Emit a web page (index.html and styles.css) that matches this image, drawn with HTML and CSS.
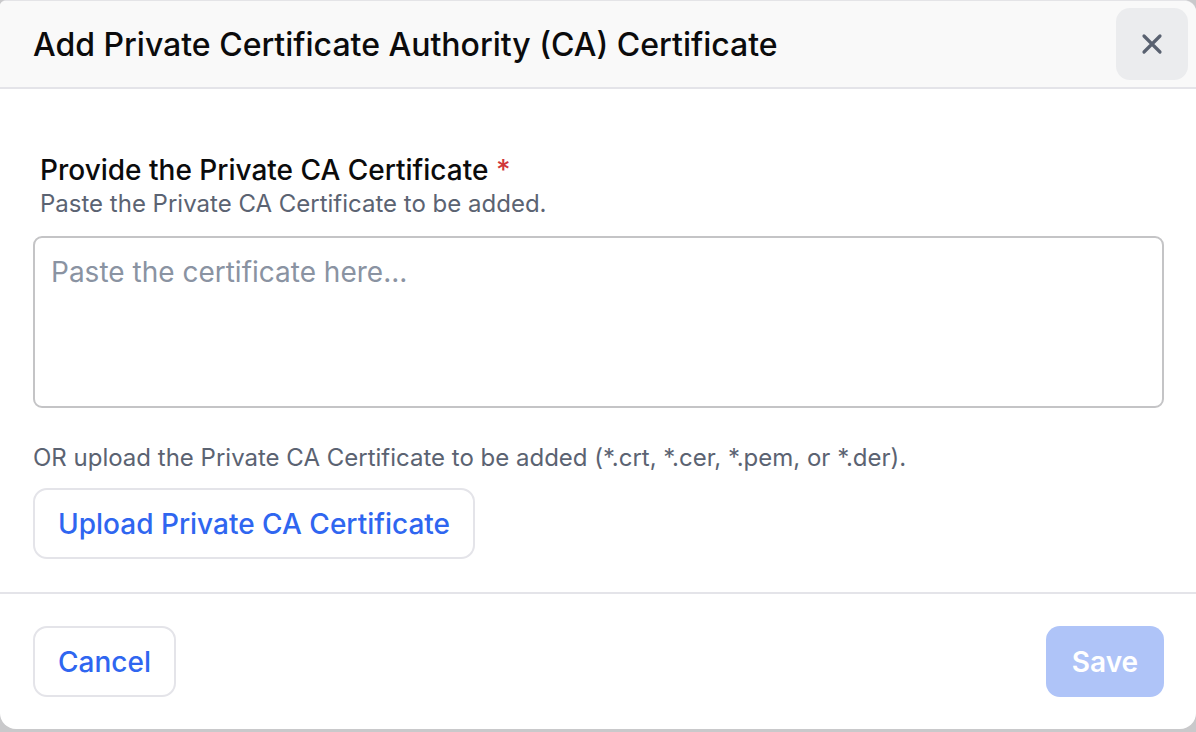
FILE: index.html
```html
<!DOCTYPE html>
<html lang="en">
<head>
<meta charset="utf-8">
<title>Add Private Certificate Authority (CA) Certificate</title>
<link rel="stylesheet" href="styles.css">
</head>
<body>
<div class="dialog">
  <header class="dialog-header">
    <h1 class="dialog-title">Add Private Certificate Authority (CA) Certificate</h1>
    <button class="close-btn" aria-label="Close">
      <svg width="22" height="22" viewBox="0 0 22 22"><path d="M3 3 L19 19 M19 3 L3 19" stroke="#596170" stroke-width="3.2" stroke-linecap="round" fill="none"/></svg>
    </button>
  </header>
  <main class="dialog-body">
    <div class="field-head">
      <div class="field-label">Provide the Private CA Certificate <span class="req">*</span></div>
      <div class="field-help">Paste the Private CA Certificate to be added.</div>
    </div>
    <textarea class="cert-input" placeholder="Paste the certificate here..."></textarea>
    <p class="upload-hint">OR upload the Private CA Certificate to be added (*.crt, *.cer, *.pem, or *.der).</p>
    <button class="btn btn-outline upload-btn">Upload Private CA Certificate</button>
  </main>
  <footer class="dialog-footer">
    <button class="btn btn-outline">Cancel</button>
    <button class="btn btn-primary" disabled>Save</button>
  </footer>
</div>
</body>
</html>
```

FILE: styles.css
```css
* { box-sizing: border-box; }
html, body { margin: 0; padding: 0; }
body {
  background: #c9c9cb;
  font-family: Inter, "Noto Sans", "Liberation Sans", sans-serif;
  width: 1196px;
  height: 732px;
  overflow: hidden;
}
.dialog {
  width: 1196px;
  height: 729px;
  background: #ffffff;
  border-radius: 6px 12px 16px 16px;
  border-top: 1px solid #e4e4e7;
  display: flex;
  flex-direction: column;
  overflow: hidden;
}
.dialog-header {
  height: 88px;
  background: #f9f9f9;
  border-bottom: 2px solid #e4e4e9;
  display: flex;
  align-items: center;
  justify-content: space-between;
  padding: 0 8px 0 33px;
  flex-shrink: 0;
}
.dialog-title {
  margin: 0;
  font-size: 32px;
  font-weight: 500;
  color: #0b0b0c;
  letter-spacing: 0;
}
.close-btn {
  width: 72px;
  height: 72px;
  border: none;
  border-radius: 14px;
  background: #ebecee;
  display: flex;
  align-items: center;
  justify-content: center;
  padding: 0;
  margin-top: -1px;
}
.dialog-body {
  padding: 65px 32px 33px 33px;
  border-bottom: 2px solid #e4e4e9;
  display: flex;
  flex-direction: column;
  align-items: flex-start;
}
.field-head { padding-left: 7px; }
.field-label {
  font-size: 28px;
  font-weight: 500;
  color: #0b0b0c;
  line-height: 32px;
}
.req { color: #d0373a; }
.field-help {
  margin-top: 3px;
  font-size: 24px;
  color: #5b6372;
  line-height: 30px;
}
.cert-input {
  margin-top: 17px;
  width: 1131px;
  height: 172px;
  border: 2px solid #c4c4c6;
  border-radius: 9px;
  padding: 17px 16px;
  font-family: inherit;
  font-size: 28px;
  resize: none;
  outline: none;
  color: #0b0b0c;
}
.cert-input::placeholder { color: #8a93a2; }
.upload-hint {
  margin: 35px 0 0 0;
  font-size: 24px;
  line-height: 30px;
  color: #5b6372;
}
.btn {
  font-family: inherit;
  font-size: 28px;
  font-weight: 500;
  height: 71px;
  border-radius: 14px;
  padding: 0 20px;
  cursor: pointer;
  white-space: nowrap;
}
.btn-outline {
  background: #ffffff;
  border: 2px solid #e4e4e9;
  color: #2f66f0;
}
.upload-btn { margin-top: 15px; width: 442px; }
.dialog-footer {
  flex: 1;
  display: flex;
  align-items: center;
  justify-content: space-between;
  padding: 0 32px 0 33px;
}
.dialog-footer .btn-outline { width: 143px; }
.btn-primary {
  background: #afc4f8;
  border: none;
  color: #ffffff;
  width: 118px;
  font-weight: 600;
}
```
